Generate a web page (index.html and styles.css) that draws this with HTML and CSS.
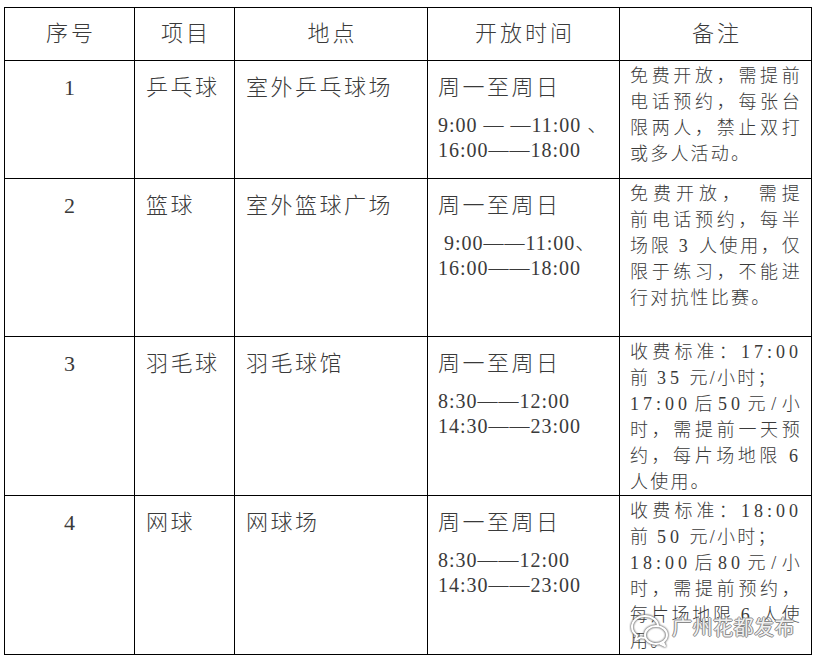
FILE: index.html
```html
<!DOCTYPE html>
<html lang="zh-CN">
<head>
<meta charset="utf-8">
<title>开放时间</title>
<link rel="stylesheet" href="styles.css">
</head>
<body>
<div class="page">
  <table class="sched">
    <colgroup>
      <col class="w1"><col class="w2"><col class="w3"><col class="w4"><col class="w5">
    </colgroup>
    <thead>
      <tr class="r-head">
        <th>序号</th><th>项目</th><th>地点</th><th>开放时间</th><th>备注</th>
      </tr>
    </thead>
    <tbody>
      <tr class="r1">
        <td class="c-main c-no">1</td>
        <td class="c-main">乒乓球</td>
        <td class="c-main">室外乒乓球场</td>
        <td class="c-main c-time">
          <div class="day">周一至周日</div>
          <div class="times"><div>9:00 — —11:00 、</div><div>16:00——18:00</div></div>
        </td>
        <td class="c-note">
          <span class="ln">免费开放，需提前</span>
          <span class="ln">电话预约，每张台</span>
          <span class="ln">限两人，禁止双打</span>
          <span class="ln end">或多人活动。</span>
        </td>
      </tr>
      <tr class="r2">
        <td class="c-main c-no">2</td>
        <td class="c-main">篮球</td>
        <td class="c-main">室外篮球广场</td>
        <td class="c-main c-time">
          <div class="day">周一至周日</div>
          <div class="times"><div>&nbsp;9:00——11:00、</div><div>16:00——18:00</div></div>
        </td>
        <td class="c-note">
          <span class="ln">免费开放，　需提</span>
          <span class="ln">前电话预约，每半</span>
          <span class="ln">场限 <span class="n">3</span> 人使用，仅</span>
          <span class="ln">限于练习，不能进</span>
          <span class="ln end">行对抗性比赛。</span>
        </td>
      </tr>
      <tr class="r3">
        <td class="c-main c-no">3</td>
        <td class="c-main">羽毛球</td>
        <td class="c-main">羽毛球馆</td>
        <td class="c-main c-time">
          <div class="day">周一至周日</div>
          <div class="times"><div>8:30——12:00</div><div>14:30——23:00</div></div>
        </td>
        <td class="c-note">
          <span class="ln">收费标准：<span class="n">17:00</span></span>
          <span class="ln end">前 <span class="n">35</span> 元/小时；</span>
          <span class="ln"><span class="n">17:00</span>后<span class="n">50</span>元/小</span>
          <span class="ln">时，需提前一天预</span>
          <span class="ln">约，每片场地限 <span class="n">6</span></span>
          <span class="ln end">人使用。</span>
        </td>
      </tr>
      <tr class="r4">
        <td class="c-main c-no">4</td>
        <td class="c-main">网球</td>
        <td class="c-main">网球场</td>
        <td class="c-main c-time">
          <div class="day">周一至周日</div>
          <div class="times"><div>8:30——12:00</div><div>14:30——23:00</div></div>
        </td>
        <td class="c-note">
          <span class="ln">收费标准：<span class="n">18:00</span></span>
          <span class="ln end">前 <span class="n">50</span> 元/小时；</span>
          <span class="ln"><span class="n">18:00</span>后<span class="n">80</span>元/小</span>
          <span class="ln">时，需提前预约，</span>
          <span class="ln">每片场地限 <span class="n">6</span> 人使</span>
          <span class="ln end">用。</span>
        </td>
      </tr>
    </tbody>
  </table>

  <div class="watermark">
    <svg class="wm-icon" width="40" height="36" viewBox="0 0 40 36" aria-hidden="true">
      <path d="M15 4 C7.5 4 2 9 2 15 C2 18.5 4 21.5 7 23.5 L5.5 28 L11 25.2 C12.3 25.6 13.6 25.8 15 25.8" fill="none" stroke="#fff" stroke-width="2" stroke-linecap="round" stroke-linejoin="round"/>
      <path d="M15 4 C22.5 4 28 9 28 14" fill="none" stroke="#fff" stroke-width="2" stroke-linecap="round"/>
      <ellipse cx="26" cy="23" rx="11" ry="9" fill="none" stroke="#fff" stroke-width="2"/>
      <path d="M33 30 L35 34 L30 31.5" fill="none" stroke="#fff" stroke-width="2" stroke-linejoin="round"/>
    </svg>
    <span class="wm-text">广州花都发布</span>
  </div>
</div>
</body>
</html>
```

FILE: styles.css
```css
html, body {
  margin: 0;
  padding: 0;
  background: #ffffff;
}

.page {
  position: relative;
  width: 815px;
  height: 660px;
  padding: 7px 0 0 4px;
  box-sizing: border-box;
  overflow: hidden;
}

.sched {
  border-collapse: collapse;
  table-layout: fixed;
  width: 807px;
  font-family: "Liberation Serif", "Noto Sans CJK SC", serif;
  font-weight: 300;
  color: #3a3a3a;
}

.w1 { width: 130px; }
.w2 { width: 100px; }
.w3 { width: 193px; }
.w4 { width: 192px; }
.w5 { width: 192px; }

.sched th,
.sched td {
  border: 1px solid #000;
}

.sched th {
  padding: 0;
  font-size: 22px;
  font-weight: 300;
  letter-spacing: 3px;
  text-indent: 3px;
  line-height: 30px;
  text-align: center;
  vertical-align: middle;
}

.r-head { height: 53px; }
.r1 { height: 118px; }
.r2 { height: 158px; }
.r3 { height: 158px; }
.r4 { height: 159px; }

.sched .c-main {
  font-size: 22px;
  line-height: 30px;
  letter-spacing: 2.5px;
  padding: 12px 10px 0 11px;
  vertical-align: top;
  text-align: left;
}

.sched .c-no {
  text-align: center;
  letter-spacing: 0;
  padding-left: 0;
  padding-right: 0;
}

.sched .c-time {
  padding-left: 10px;
}

.times {
  margin-top: 10px;
  font-size: 20px;
  line-height: 25px;
  letter-spacing: 1px;
  white-space: nowrap;
}

.sched .c-note {
  font-size: 18px;
  line-height: 26px;
  letter-spacing: 2.2px;
  padding: 2px 9px 0 10px;
  vertical-align: top;
}

.ln {
  display: block;
  text-align: justify;
  text-align-last: justify;
}

.ln.end {
  text-align-last: left;
}

.n {
  letter-spacing: 4px;
}

.watermark {
  position: absolute;
  left: 630px;
  top: 606px;
  display: flex;
  align-items: center;
  gap: 2px;
}

.wm-icon {
  display: block;
  filter: drop-shadow(0 0 1px #666) drop-shadow(0 0 0.5px #888);
  margin-top: 6px;
}

.wm-text {
  font-family: "Noto Sans CJK SC", sans-serif;
  font-size: 20px;
  line-height: 24px;
  letter-spacing: 0.5px;
  color: rgba(255, 255, 255, 0.9);
  text-shadow: -1px 0 #8a8a8a, 1px 0 #8a8a8a, 0 -1px #8a8a8a, 0 1px #8a8a8a;
}
```
